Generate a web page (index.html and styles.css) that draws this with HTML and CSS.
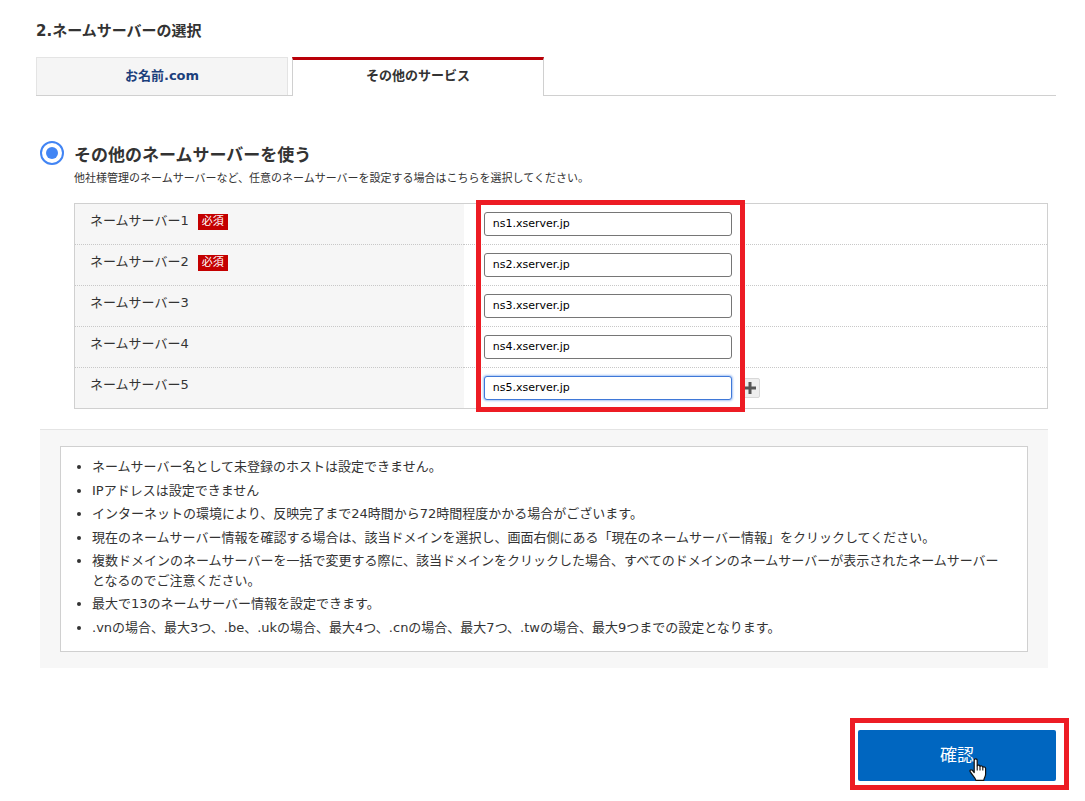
FILE: index.html
```html
<!DOCTYPE html>
<html lang="ja">
<head>
<meta charset="utf-8">
<title>ネームサーバーの選択</title>
<link rel="stylesheet" href="styles.css">
</head>
<body>
<main class="page">
  <h2 class="page-title">2.ネームサーバーの選択</h2>
  <nav class="tabs">
    <a class="tab" href="#onamae">お名前.com</a>
    <a class="tab tab-active" href="#other" aria-current="page">その他のサービス</a>
  </nav>

  <form class="form">
    <div class="choice">
      <input class="choice-radio" type="radio" name="server" id="other-server" checked>
      <div class="choice-body">
        <label class="choice-title" for="other-server">その他のネームサーバーを使う</label>
        <p class="choice-text">他社様管理のネームサーバーなど、任意のネームサーバーを設定する場合はこちらを選択してください。</p>
        <div class="servers-wrap">
          <table class="servers">
            <tr>
              <th scope="row"><label for="ns1">ネームサーバー1</label><span class="required">必須</span></th>
              <td><div class="field"><input class="text" type="text" id="ns1" value="ns1.xserver.jp"></div></td>
            </tr>
            <tr>
              <th scope="row"><label for="ns2">ネームサーバー2</label><span class="required">必須</span></th>
              <td><div class="field"><input class="text" type="text" id="ns2" value="ns2.xserver.jp"></div></td>
            </tr>
            <tr>
              <th scope="row"><label for="ns3">ネームサーバー3</label></th>
              <td><div class="field"><input class="text" type="text" id="ns3" value="ns3.xserver.jp"></div></td>
            </tr>
            <tr>
              <th scope="row"><label for="ns4">ネームサーバー4</label></th>
              <td><div class="field"><input class="text" type="text" id="ns4" value="ns4.xserver.jp"></div></td>
            </tr>
            <tr>
              <th scope="row"><label for="ns5">ネームサーバー5</label></th>
              <td><div class="field"><input class="text text-focus" type="text" id="ns5" value="ns5.xserver.jp"><button class="add" type="button" aria-label="追加"><svg width="12" height="12" viewBox="0 0 12 12"><path d="M6 0v12M0 6h12" stroke="#555" stroke-width="3"/></svg></button></div></td>
            </tr>
          </table>
          <div class="mark mark-servers"></div>
        </div>
      </div>
    </div>

    <section class="notes">
      <ul class="notes-list">
        <li>ネームサーバー名として未登録のホストは設定できません。</li>
        <li>IPアドレスは設定できません</li>
        <li>インターネットの環境により、反映完了まで24時間から72時間程度かかる場合がございます。</li>
        <li>現在のネームサーバー情報を確認する場合は、該当ドメインを選択し、画面右側にある「現在のネームサーバー情報」をクリックしてください。</li>
        <li>複数ドメインのネームサーバーを一括で変更する際に、該当ドメインをクリックした場合、すべてのドメインのネームサーバーが表示されたネームサーバーとなるのでご注意ください。</li>
        <li>最大で13のネームサーバー情報を設定できます。</li>
        <li>.vnの場合、最大3つ、.be、.ukの場合、最大4つ、.cnの場合、最大7つ、.twの場合、最大9つまでの設定となります。</li>
      </ul>
    </section>
  </form>

  <div class="actions">
    <div class="confirm-wrap">
      <button class="confirm" type="button">確認</button>
      <div class="mark mark-confirm"></div>
      <svg class="pointer" width="18" height="24" viewBox="0 0 18 24"><path d="M5.2 14.5V2.6c0-2.2 3-2.2 3 0v5.200c.5-1 2.600-.8 2.800.6.7-.8 2.600-.5 2.800.8.9-.7 2.800-.2 2.800 1.400v5.600c0 2.600-1.600 3.200-1.800 6.100H6.900C6.400 19.700 3.700 17.600 1.300 13.900c-1-1.600.8-2.800 2.100-1.600z" fill="#fff" stroke="#111" stroke-width="1.200" stroke-linejoin="round"/><path d="M8.200 7.800v4.600M11 8.400v4M13.800 9.200v3.200" fill="none" stroke="#111" stroke-width="1.100"/></svg>
    </div>
  </div>
</main>
</body>
</html>
```
FILE: styles.css
```css
* {
  box-sizing: border-box;
}

body {
  margin: 0;
  background: #fff;
  color: #333;
  font: 13px/20px "DejaVu Sans", "Noto Sans CJK JP", sans-serif;
}

.page {
  padding: 20px 29px 20px 36px;
}

.page-title {
  margin: 0 0 15px;
  font-size: 15px;
  line-height: 22px;
}

.tabs {
  display: flex;
  gap: 4px;
  height: 39px;
  border-bottom: 1px solid #d0d0d0;
}

.tab {
  width: 252px;
  height: 38px;
  border: 1px solid #e4e4e4;
  border-bottom: 0;
  background: #f5f5f5;
  color: #1c3f7c;
  font-weight: bold;
  line-height: 36px;
  text-align: center;
  text-decoration: none;
}

.tab-active {
  height: 39px;
  border: 1px solid #d0d0d0;
  border-top: 3px solid #b90008;
  border-bottom: 0;
  background: #fff;
  color: #333;
  line-height: 32px;
}

.form {
  padding: 45px 8px 0 4px;
}

.choice {
  display: flex;
  gap: 10px;
}

.choice-radio {
  flex: none;
  width: 24px;
  height: 24px;
  margin: 0;
  appearance: none;
  border: 2px solid #4285f4;
  border-radius: 50%;
  background: #4285f4;
  background-clip: content-box;
  padding: 4px;
}

.choice-body {
  flex: 1;
}

.choice-title {
  display: block;
  font-size: 17px;
  font-weight: bold;
  line-height: 28px;
}

.choice-text {
  margin: 0 0 14px;
  font-size: 11px;
  line-height: 20px;
}

.servers-wrap {
  position: relative;
}

.servers {
  width: 100%;
  border: 1px solid #d0d0d0;
  border-spacing: 0;
}

.servers th {
  width: 40%;
  padding: 7px 15px;
  background: #f6f6f6;
  font-weight: normal;
  text-align: left;
  vertical-align: top;
}

.servers td {
  padding: 8px 20px;
}

.servers tr + tr > * {
  border-top: 1px dotted #c8c8c8;
}

.required {
  display: inline-block;
  margin-left: 9px;
  padding: 0 4px;
  background: #c40000;
  color: #fff;
  font-size: 11px;
  line-height: 16px;
}

.field {
  display: flex;
  align-items: center;
  gap: 8px;
}

.text {
  width: 248px;
  height: 24px;
  padding: 0 8px 2px;
  border: 1px solid #767676;
  border-radius: 3px;
  background: #fff;
  color: #000;
  font: 11px "DejaVu Sans", sans-serif;
}

.text-focus {
  border-color: #3f78d8;
  box-shadow: 0 0 2px 1px #a9c6f5;
}

.add {
  display: flex;
  align-items: center;
  justify-content: center;
  width: 20px;
  height: 20px;
  padding: 0;
  border: 1px solid #d8d8d8;
  border-radius: 2px;
  background: #eee;
}

.mark {
  position: absolute;
  border: 5px solid #ed1c24;
  pointer-events: none;
}

.mark-servers {
  top: -3px;
  bottom: -3px;
  left: calc(40% + 12px);
  width: 269px;
}

.notes {
  margin-top: 20px;
  padding: 16px 20px;
  border-top: 1px solid #e4e4e4;
  background: #f7f7f7;
}

.notes-list {
  margin: 0;
  padding: 10px 24px 14px 31px;
  border: 1px solid #d0d0d0;
  background: #fff;
  line-height: 1.5;
}

.notes-list li + li {
  margin-top: 4px;
}

.actions {
  display: flex;
  justify-content: flex-end;
  margin-top: 62px;
}

.confirm-wrap {
  position: relative;
}

.confirm {
  display: block;
  width: 198px;
  height: 51px;
  padding: 0 0 4px;
  border: 0;
  border-radius: 2px;
  background: #0066c0;
  color: #fff;
  font: 17px "Noto Sans CJK JP", sans-serif;
}

.mark-confirm {
  inset: -12px -13px -9px -8px;
}

.pointer {
  position: absolute;
  top: 28px;
  left: 111px;
}
```
